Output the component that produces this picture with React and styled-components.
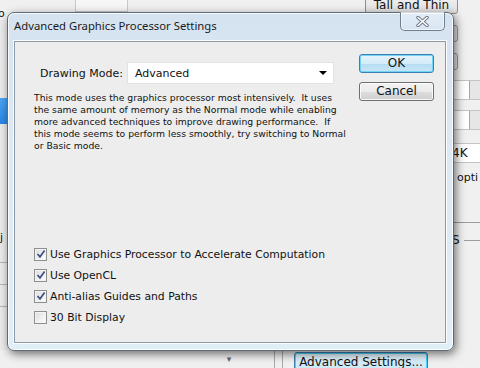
import React from 'react';
import styled, { createGlobalStyle } from 'styled-components';

const GlobalStyle = createGlobalStyle`
	html, body {
		margin: 0;
		padding: 0;
		background: #f0f0f0;
	}
	* {
		box-sizing: border-box;
	}
`;

const CHECKS = [
	{ label: 'Use Graphics Processor to Accelerate Computation', checked: true },
	{ label: 'Use OpenCL', checked: true },
	{ label: 'Anti-alias Guides and Paths', checked: true },
	{ label: '30 Bit Display', checked: false },
];

const Check = ({ checked }) => (
	<Box>
		{checked && (
			<svg width="10" height="10" viewBox="0 0 10 10">
				<path d="M1.5 5 L4 7.8 L8.6 1.6" fill="none" stroke="#3d4f86" strokeWidth="1.7" />
			</svg>
		)}
	</Box>
);

const App = () => {
	return (
		<Screen>
			<GlobalStyle />
			<Backdrop>
				<TopStrip>
					<Glyph>o</Glyph>
					<GhostBox />
					<TallButton>Tall and Thin</TallButton>
				</TopStrip>
				<Middle>
					<Sidebar>
						<SideRow $h={26} $selected />
						<SideRow $h={104} />
						<SideRow $h={34}>
							<SideText>bj</SideText>
						</SideRow>
						<SideRow $h={22} $line />
						<SideRow $h={22} $line />
						<SideRow $h={22} $line />
					</Sidebar>
					<RightStrip>
						<MiniButton $mt={5} />
						<MiniButton $mt={11} />
						<Field $mt={10} $spin />
						<Field $mt={10} $spin />
						<Field $mt={13}>4K</Field>
						<StripText>r opti</StripText>
						<Rule $mt={30} />
						<Rule $mt={4}>S</Rule>
					</RightStrip>
				</Middle>
				<BottomStrip>
					<ArrowSlot>▾</ArrowSlot>
					<VLine $offset={38} />
					<VLine $offset={7} />
					<AdvButton>Advanced Settings...</AdvButton>
				</BottomStrip>
			</Backdrop>

			<Dialog>
				<TitleBar>
					<Title>Advanced Graphics Processor Settings</Title>
					<CloseButton>
						<svg width="13" height="11" viewBox="0 0 13 11">
							<path d="M2 1.5 L11 9.5 M11 1.5 L2 9.5" stroke="#6a7683" strokeWidth="3.4" strokeLinecap="round" />
							<path d="M2 1.5 L11 9.5 M11 1.5 L2 9.5" stroke="#ffffff" strokeWidth="1.6" strokeLinecap="round" />
						</svg>
					</CloseButton>
				</TitleBar>
				<Client>
					<Top>
						<Form>
							<ModeRow>
								<ModeLabel>Drawing Mode:</ModeLabel>
								<Select>
									<span>Advanced</span>
									<Caret />
								</Select>
							</ModeRow>
							<Description>
								This mode uses the graphics processor most intensively.&nbsp; It uses
								<br />
								the same amount of memory as the Normal mode while enabling
								<br />
								more advanced techniques to improve drawing performance.&nbsp; If
								<br />
								this mode seems to perform less smoothly, try switching to Normal
								<br />
								or Basic mode.
							</Description>
						</Form>
						<Buttons>
							<PushButton $default>OK</PushButton>
							<PushButton>Cancel</PushButton>
						</Buttons>
					</Top>
					<CheckList>
						{CHECKS.map((c) => (
							<CheckRow key={c.label}>
								<Check checked={c.checked} />
								<CheckLabel>{c.label}</CheckLabel>
							</CheckRow>
						))}
					</CheckList>
				</Client>
			</Dialog>
		</Screen>
	);
};

export default App;

const uiFont = `'DejaVu Sans', Verdana, sans-serif`;

const Screen = styled.div`
	position: relative;
	width: 480px;
	height: 368px;
	overflow: hidden;
	background: #f0f0f0;
	font-family: ${uiFont};
`;

/* ---------- window behind ---------- */

const Backdrop = styled.div`
	display: flex;
	flex-direction: column;
	height: 100%;
	color: #111;
`;

const TopStrip = styled.div`
	display: flex;
	align-items: flex-start;
	height: 20px;
`;

const Glyph = styled.span`
	font-size: 11px;
	margin-top: 7px;
	margin-left: -2px;
`;

const GhostBox = styled.div`
	width: 53px;
	height: 12px;
	margin-left: 70px;
	border: 1px solid #c9c9c9;
	border-top: none;
	background: #f6f6f6;
`;

const TallButton = styled.div`
	margin-left: auto;
	margin-right: 22px;
	margin-top: -6px;
	width: 93px;
	height: 20px;
	border: 1px solid #8f8f8f;
	border-radius: 3px;
	background: linear-gradient(#f2f2f2, #e0e0e0);
	font-size: 12px;
	line-height: 20px;
	text-align: center;
`;

const Middle = styled.div`
	flex: 1;
	display: flex;
	justify-content: space-between;
`;

const Sidebar = styled.div`
	width: 14px;
	display: flex;
	flex-direction: column;
	background: #ebebeb;
	border-right: 1px solid #a0a0a0;
	padding-top: 78px;
`;

const SideRow = styled.div`
	height: ${(p) => p.$h}px;
	background: ${(p) => (p.$selected ? 'linear-gradient(#4aa3f5, #2a86e6)' : 'transparent')};
	border-top: ${(p) => (p.$line ? '1px solid #b5b5b5' : 'none')};
	font-size: 11px;
	overflow: hidden;
`;

const SideText = styled.span`
	display: block;
	margin-left: -7px;
	margin-top: 3px;
	line-height: 14px;
`;

const RightStrip = styled.div`
	width: 28px;
	display: flex;
	flex-direction: column;
	align-items: flex-start;
	font-size: 12px;
`;

const MiniButton = styled.div`
	width: 26px;
	height: 17px;
	margin-left: -20px;
	margin-top: ${(p) => p.$mt}px;
	border: 1px solid #9a9a9a;
	border-radius: 3px;
	background: #e9e9e9;
`;

const Field = styled.div`
	width: 40px;
	height: 20px;
	margin-top: ${(p) => p.$mt}px;
	background: ${(p) =>
		p.$spin ? 'linear-gradient(to right, #fff 17px, #a5a5a5 17px, #a5a5a5 18px, #e6e6e6 18px)' : '#fff'};
	border-top: 1px solid #c4c4c4;
	border-bottom: 1px solid #c4c4c4;
	line-height: 18px;
	font-size: 12px;
`;

const StripText = styled.div`
	font-size: 11px;
	margin-left: -3px;
	margin-top: 8px;
	line-height: 14px;
`;

const Rule = styled.div`
	width: 100%;
	height: 14px;
	margin-top: ${(p) => p.$mt}px;
	display: flex;
	align-items: center;
	gap: 4px;
	font-size: 12px;
	&::after {
		content: '';
		flex: 1;
		border-top: 1px solid #9c9c9c;
	}
`;

const BottomStrip = styled.div`
	height: 18px;
	display: flex;
	align-items: flex-start;
`;

const ArrowSlot = styled.div`
	margin-left: 222px;
	margin-top: 4px;
	width: 14px;
	font-size: 9px;
	color: #666;
	text-align: center;
`;

const VLine = styled.div`
	width: 1px;
	height: 18px;
	margin-left: ${(p) => p.$offset}px;
	background: #a8a8a8;
`;

const AdvButton = styled.div`
	margin-left: 11px;
	margin-top: 2px;
	width: 134px;
	height: 22px;
	border: 1px solid #3c7fb1;
	border-radius: 3px;
	box-shadow: inset 0 0 0 1px #48d3fb;
	background: linear-gradient(#e5f4fc, #c4e5f6);
	font-size: 12px;
	line-height: 18px;
	text-align: center;
`;

/* ---------- dialog ---------- */

const Dialog = styled.div`
	position: absolute;
	left: 7px;
	top: 12px;
	width: 447px;
	height: 339px;
	display: flex;
	flex-direction: column;
	padding: 0 7px 7px 6px;
	border: 1px solid #5f6c78;
	border-radius: 7px;
	background: linear-gradient(180deg, #d5e3f1 0%, #dde9f4 40%, #e0eef6 100%);
	box-shadow: inset 0 0 0 1px rgba(255, 255, 255, 0.8), 2px 3px 10px rgba(0, 0, 0, 0.55);
`;

const TitleBar = styled.div`
	height: 28px;
	display: flex;
	align-items: flex-start;
	justify-content: space-between;
`;

const Title = styled.div`
	margin-top: 5px;
	margin-left: 0;
	font-family: 'Noto Sans', 'Open Sans', sans-serif;
	font-size: 11.3px;
	color: #1b1b1b;
`;

const CloseButton = styled.div`
	width: 45px;
	height: 19px;
	margin-top: -1px;
	margin-right: 1px;
	display: flex;
	align-items: center;
	justify-content: center;
	border: 1px solid #6f7f8e;
	border-top: none;
	border-radius: 0 0 5px 5px;
	background: linear-gradient(rgba(255, 255, 255, 0.35), rgba(220, 232, 244, 0.4));
	box-shadow: inset 0 0 0 1px rgba(255, 255, 255, 0.6);
`;

const Client = styled.div`
	flex: 1;
	display: flex;
	flex-direction: column;
	background: #ededed;
	border: 1px solid #8e9aa6;
	box-shadow: 0 0 0 1px rgba(255, 255, 255, 0.85);
	padding: 12px 11px 19px 19px;
`;

const Top = styled.div`
	display: flex;
	justify-content: space-between;
`;

const Form = styled.div`
	display: flex;
	flex-direction: column;
`;

const ModeRow = styled.div`
	display: flex;
	align-items: center;
	margin-top: 8px;
	margin-left: 6px;
	gap: 4px;
`;

const ModeLabel = styled.span`
	font-size: 11px;
	color: #111;
`;

const Select = styled.div`
	width: 207px;
	height: 22px;
	display: flex;
	align-items: center;
	justify-content: space-between;
	padding: 0 6px 0 7px;
	background: #fff;
	border: 1px solid #e2e2e2;
	font-size: 11px;
	color: #111;
`;

const Caret = styled.span`
	width: 0;
	height: 0;
	border-left: 4px solid transparent;
	border-right: 4px solid transparent;
	border-top: 4px solid #000;
`;

const Description = styled.p`
	margin: 8px 0 0;
	font-size: 9.25px;
	line-height: 12px;
	color: #111;
	white-space: nowrap;
`;

const Buttons = styled.div`
	display: flex;
	flex-direction: column;
	gap: 9px;
`;

const PushButton = styled.div`
	width: 75px;
	height: 19px;
	border: 1px solid ${(p) => (p.$default ? '#3c7fb1' : '#707070')};
	border-radius: 3px;
	background: ${(p) =>
		p.$default ? 'linear-gradient(#e5f4fc 0%, #d3ecf9 50%, #b5dcf3 51%, #c8e6f6 100%)' : 'linear-gradient(#f2f2f2 0%, #ebebeb 50%, #dddddd 51%, #cfcfcf 100%)'};
	box-shadow: inset 0 0 0 1px ${(p) => (p.$default ? '#6fd4f7' : 'rgba(255,255,255,0.8)')};
	font-size: 12px;
	line-height: 17px;
	text-align: center;
	color: #111;
`;

const CheckList = styled.div`
	margin-top: auto;
	display: flex;
	flex-direction: column;
	gap: 9px;
`;

const CheckRow = styled.div`
	display: flex;
	align-items: center;
	gap: 3px;
	height: 12px;
`;

const Box = styled.span`
	width: 13px;
	height: 13px;
	display: flex;
	align-items: center;
	justify-content: center;
	border: 1px solid #8e8f8f;
	background: linear-gradient(135deg, #dcdcdc, #ffffff);
	box-shadow: inset 0 0 0 1px #f4f4f4;
`;

const CheckLabel = styled.span`
	font-size: 10.8px;
	color: #111;
`;
